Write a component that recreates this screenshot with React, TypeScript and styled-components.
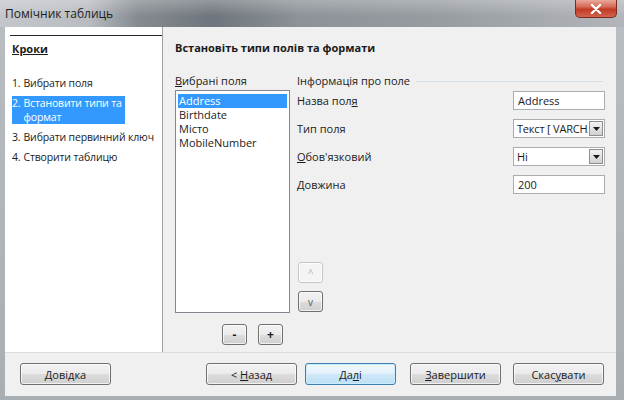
import React from 'react';
import styled, { createGlobalStyle, css } from 'styled-components';

const uiFont = `'Open Sans', 'Noto Sans', 'Liberation Sans', sans-serif`;

const GlobalStyle = createGlobalStyle`
  html, body {
    margin: 0;
    padding: 0;
  }
  body {
    width: 624px;
    height: 400px;
    overflow: hidden;
    font-family: ${uiFont};
  }
`;

const Window = styled.div`
  width: 624px;
  height: 400px;
  display: flex;
  flex-direction: column;
  background: linear-gradient(180deg, #b9bec3 0%, #a9aeb3 100%);
  font-family: ${uiFont};
  font-size: 11px;
  color: #1b1b1b;
`;

const TitleBar = styled.div`
  flex: 0 0 27px;
  display: flex;
  justify-content: space-between;
  align-items: flex-start;
  background:
    linear-gradient(180deg, rgba(255, 255, 255, 0.25), rgba(255, 255, 255, 0) 60%),
    linear-gradient(90deg, #c3c7cb 0%, #b9bdc1 14%, #858b91 22%, #6f757c 34%, #8c9298 48%, #979ca1 70%, #a9adb2 90%, #b2b6ba 100%);
`;

const Title = styled.div`
  padding: 6px 0 0 5px;
  font-size: 12px;
  line-height: 16px;
  color: #1e1e1e;
`;

const CloseButton = styled.div`
  width: 42px;
  height: 18px;
  margin-right: 7px;
  box-sizing: border-box;
  border: 1px solid #7a2a20;
  border-top: none;
  border-radius: 0 0 5px 5px;
  background: linear-gradient(180deg, #e8a89b 0%, #d66a57 40%, #c13a26 55%, #d4634d 100%);
  display: flex;
  align-items: center;
  justify-content: center;
`;

const Body = styled.div`
  flex: 1;
  display: flex;
  padding: 0 8px 4px 5px;
`;

const Client = styled.div`
  flex: 1;
  display: flex;
  flex-direction: column;
  background: #f0f0f0;
`;

const Panels = styled.div`
  flex: 0 0 325px;
  display: flex;
`;

const StepsPanel = styled.div`
  width: 157px;
  background: #fff;
  border-right: 1px solid #a0a0a0;
  padding-top: 8px;
`;

const StepsRule = styled.div`
  margin-left: 5px;
  border-top: 1px solid #2a2a2a;
`;

const StepsTitle = styled.div`
  margin: 5px 0 0 7px;
  font-weight: 700;
  font-size: 11px;
  line-height: 16px;
  text-decoration: underline;
`;

const StepList = styled.div`
  margin-top: 19px;
  padding-left: 7px;
  display: flex;
  flex-direction: column;
  align-items: flex-start;
  gap: 6px;
`;

const Step = styled.div<{ $active?: boolean }>`
  display: inline-flex;
  font-size: 10.5px;
  line-height: 14px;
  padding-right: 3px;
  white-space: pre;
  letter-spacing: -0.15px;
  ${({ $active }) =>
    $active &&
    css`
      background: #3399ff;
      color: #fff;
    `}
`;

const StepNum = styled.span`
  flex: 0 0 auto;
  margin-right: 3px;
`;

const MainPanel = styled.div`
  flex: 1;
  padding: 13px 11px 0 12px;
  display: flex;
  flex-direction: column;
`;

const PageTitle = styled.div`
  font-weight: 700;
  line-height: 16px;
`;

const Columns = styled.div`
  margin-top: 17px;
  display: flex;
  gap: 7px;
`;

const FieldsColumn = styled.div`
  width: 115px;
  display: flex;
  flex-direction: column;
`;

const Label = styled.div`
  line-height: 16px;
  white-space: nowrap;
`;

const ListBox = styled.div`
  margin-top: 1px;
  height: 223px;
  box-sizing: border-box;
  border: 1px solid #828790;
  background: #fff;
  padding: 3px 2px;
`;

const ListItem = styled.div<{ $selected?: boolean }>`
  line-height: 14px;
  padding-left: 1px;
  ${({ $selected }) =>
    $selected &&
    css`
      background: #3399ff;
      color: #fff;
    `}
`;

const ListButtons = styled.div`
  margin-top: 11px;
  display: flex;
  justify-content: flex-end;
  gap: 11px;
  padding-right: 7px;
`;

const buttonFace = css`
  box-sizing: border-box;
  border: 1px solid #707070;
  border-radius: 3px;
  background: linear-gradient(180deg, #f2f2f2 0%, #ebebeb 50%, #dddddd 51%, #cfcfcf 100%);
  box-shadow: inset 0 0 0 1px rgba(255, 255, 255, 0.7);
  display: flex;
  align-items: center;
  justify-content: center;
  font-family: ${uiFont};
  font-size: 11px;
  color: #1b1b1b;
`;

const SmallButton = styled.div<{ $disabled?: boolean; $light?: boolean }>`
  ${buttonFace}
  width: 25px;
  height: 21px;
  font-weight: ${({ $light }) => ($light ? 400 : 700)};
  font-size: ${({ $light }) => ($light ? '10px' : '12px')};
  ${({ $light }) =>
    $light &&
    css`
      color: #505a66;
    `}
  ${({ $disabled }) =>
    $disabled &&
    css`
      border-color: #c6c6c6;
      background: #f4f4f4;
      color: #b0b0b0;
    `}
`;

const InfoColumn = styled.div`
  flex: 1;
  display: flex;
  flex-direction: column;
`;

const GroupHeader = styled.div`
  display: flex;
  align-items: center;
  line-height: 16px;
  &::after {
    content: '';
    flex: 1;
    margin: 1px 2px 0 6px;
    border-top: 1px solid #d5dfe5;
  }
`;

const FieldGrid = styled.div`
  margin-top: 2px;
  display: grid;
  grid-template-columns: 1fr 92px;
  grid-auto-rows: 19px;
  row-gap: 9px;
  align-items: center;
`;

const TextBox = styled.div`
  height: 19px;
  box-sizing: border-box;
  border: 1px solid #abadb3;
  background: #fff;
  padding: 0 4px;
  line-height: 17px;
  white-space: nowrap;
  overflow: hidden;
`;

const SelectBox = styled.div`
  height: 19px;
  box-sizing: border-box;
  border: 1px solid #abadb3;
  background: #fff;
  display: flex;
  align-items: stretch;
  overflow: hidden;
`;

const SelectValue = styled.div`
  flex: 1;
  min-width: 0;
  padding-left: 3px;
  line-height: 17px;
  white-space: nowrap;
  overflow: hidden;
  letter-spacing: -0.2px;
`;

const DropButton = styled.div`
  flex: 0 0 14px;
  margin: 1px;
  box-sizing: border-box;
  border: 1px solid #8e8f8f;
  background: linear-gradient(180deg, #f2f2f2 0%, #e4e4e4 50%, #d0d0d0 100%);
  display: flex;
  align-items: center;
  justify-content: center;
`;

const MoveButtons = styled.div`
  margin: 68px 0 0 1px;
  display: flex;
  flex-direction: column;
  gap: 8px;
`;

const Footer = styled.div`
  flex: 1;
  border-top: 1px solid #dcdcdc;
  padding: 10px 12px 0 15px;
  display: flex;
  align-items: flex-start;
`;

const FooterButton = styled.div<{ $default?: boolean }>`
  ${buttonFace}
  width: 91px;
  height: 22px;
  ${({ $default }) =>
    $default &&
    css`
      border-color: #3c7fb1;
      background: linear-gradient(180deg, #f0f8fd 0%, #e3f1fb 50%, #cfe8f8 51%, #bddff5 100%);
      box-shadow: inset 0 0 0 1px #c9ecfc;
    `}
`;

const NavGroup = styled.div`
  margin-left: auto;
  display: flex;
  gap: 8px;
`;

const ActionGroup = styled.div`
  margin-left: 14px;
  display: flex;
  gap: 12px;
`;

const Arrow = () => (
  <svg width="7" height="4" viewBox="0 0 7 4">
    <path d="M0 0h7L3.5 4z" fill="#1b1b1b" />
  </svg>
);

const Select = ({ value }: { value: string }) => (
  <SelectBox>
    <SelectValue>{value}</SelectValue>
    <DropButton>
      <Arrow />
    </DropButton>
  </SelectBox>
);

const steps = [
  { num: '1.', label: 'Вибрати поля' },
  { num: '2.', label: 'Встановити типи та\nформат', active: true },
  { num: '3.', label: 'Вибрати первинний ключ' },
  { num: '4.', label: 'Створити таблицю' },
];

const fields = ['Address', 'Birthdate', 'Місто', 'MobileNumber'];

export default function App() {
  return (
    <>
      <GlobalStyle />
      <Window>
        <TitleBar>
          <Title>Помічник таблиць</Title>
          <CloseButton>
            <svg width="12" height="10" viewBox="0 0 12 10">
              <path d="M2 1l8 8M10 1L2 9" stroke="#fff" strokeWidth="2.4" strokeLinecap="round" />
            </svg>
          </CloseButton>
        </TitleBar>
        <Body>
          <Client>
            <Panels>
              <StepsPanel>
                <StepsRule />
                <StepsTitle>Кроки</StepsTitle>
                <StepList>
                  {steps.map((s) => (
                    <Step key={s.num} $active={s.active}>
                      <StepNum>{s.num}</StepNum>
                      <span>{s.label}</span>
                    </Step>
                  ))}
                </StepList>
              </StepsPanel>
              <MainPanel>
                <PageTitle>Встановіть типи полів та формати</PageTitle>
                <Columns>
                  <FieldsColumn>
                    <Label>
                      <u>В</u>ибрані поля
                    </Label>
                    <ListBox>
                      {fields.map((f, i) => (
                        <ListItem key={f} $selected={i === 0}>
                          {f}
                        </ListItem>
                      ))}
                    </ListBox>
                    <ListButtons>
                      <SmallButton>-</SmallButton>
                      <SmallButton>+</SmallButton>
                    </ListButtons>
                  </FieldsColumn>
                  <InfoColumn>
                    <GroupHeader>Інформація про поле</GroupHeader>
                    <FieldGrid>
                      <Label>
                        Назва пол<u>я</u>
                      </Label>
                      <TextBox>Address</TextBox>
                      <Label>Тип поля</Label>
                      <Select value="Текст [ VARCHAR ]" />
                      <Label>
                        <u>О</u>бов'язковий
                      </Label>
                      <Select value="Ні" />
                      <Label>
                        <u>Д</u>овжина
                      </Label>
                      <TextBox>200</TextBox>
                    </FieldGrid>
                    <MoveButtons>
                      <SmallButton $light $disabled>
                        ^
                      </SmallButton>
                      <SmallButton $light>v</SmallButton>
                    </MoveButtons>
                  </InfoColumn>
                </Columns>
              </MainPanel>
            </Panels>
            <Footer>
              <FooterButton>
                <span>
                  <u>Д</u>овідка
                </span>
              </FooterButton>
              <NavGroup>
                <FooterButton>
                  <span>
                    &lt; <u>Н</u>азад
                  </span>
                </FooterButton>
                <FooterButton $default>
                  <span>
                    Да<u>л</u>і
                  </span>
                </FooterButton>
              </NavGroup>
              <ActionGroup>
                <FooterButton>
                  <span>
                    <u>З</u>авершити
                  </span>
                </FooterButton>
                <FooterButton>
                  <span>
                    Скас<u>у</u>вати
                  </span>
                </FooterButton>
              </ActionGroup>
            </Footer>
          </Client>
        </Body>
      </Window>
    </>
  );
}
